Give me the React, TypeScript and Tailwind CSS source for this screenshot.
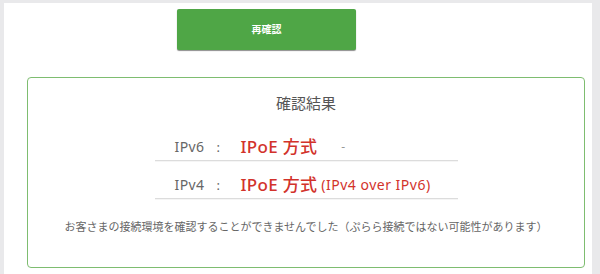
const rows = [
  { k: "IPv6", v: "IPoE 方式", note: "-", noteRed: false },
  { k: "IPv4", v: "IPoE 方式", note: "(IPv4 over IPv6)", noteRed: true },
]

const App = () => {
  return (
    <div
      className="w-[600px] h-[274px] overflow-hidden bg-[#e9e9eb] pt-[3px] pl-[4px] pr-[8px]"
      style={{ fontFamily: '"Noto Sans", "Noto Sans CJK JP", sans-serif' }}
    >
      <div className="h-full bg-white flex flex-col">
        <button className="mt-[6px] ml-[173px] w-[179px] h-[41px] rounded-[2px] bg-[#4fa646] text-white text-[10px] font-bold shadow-[0_1px_1px_rgba(0,0,0,0.45)]">
          再確認
        </button>

        <div className="mt-[27px] ml-[23px] mr-[7px] h-[191px] rounded-[4px] border border-[#7ebd70] flex flex-col items-center">
          <div className="mt-[14px] text-[15px] leading-[22px] text-[#555]">確認結果</div>

          <div className="mt-[9px] w-[303px] flex flex-col">
            {rows.map((r) => (
              <div
                key={r.k}
                className="h-[38px] flex items-end pb-[2px] pl-[20px] border-b border-[#dcdcdc] shadow-[0_1px_0_rgba(0,0,0,0.04)]"
              >
                <span className="w-[30px] text-[14px] tracking-[0.4px] leading-[22px] text-[#666]">{r.k}</span>
                <span className="ml-[12px] w-[24px] text-[13px] leading-[22px] text-[#666]">:</span>
                <span className="text-[17px] font-medium leading-[22px] text-[#d2322b] tracking-[0.3px]">{r.v}</span>
                <span
                  className={
                    r.noteRed
                      ? "ml-[4px] text-[14px] leading-[22px] tracking-[0.5px] text-[#d2322b]"
                      : "ml-[24px] text-[12px] leading-[22px] text-[#999]"
                  }
                >
                  {r.note}
                </span>
              </div>
            ))}
          </div>

          <div className="mt-[20px] text-[11px] text-[#666]">
            お客さまの接続環境を確認することができませんでした（ぷらら接続ではない可能性があります）
          </div>
        </div>
      </div>
    </div>
  )
}

export default App
